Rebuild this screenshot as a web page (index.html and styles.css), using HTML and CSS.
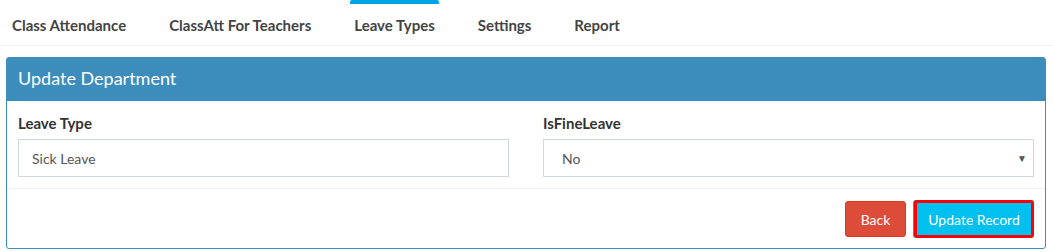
FILE: index.html
```html
<!DOCTYPE html>
<html lang="en">

<head>
    <meta charset="UTF-8">
    <meta name="viewport" content="width=device-width, initial-scale=1.0">
    <title>Update Department</title>
    <link rel="stylesheet" href="styles.css">
</head>

<body>
    <ul class="tabs">
        <li><a href="#">Class Attendance</a></li>
        <li><a href="#">ClassAtt For Teachers</a></li>
        <li class="active"><a href="#">Leave Types</a></li>
        <li><a href="#">Settings</a></li>
        <li><a href="#">Report</a></li>
    </ul>

    <div class="panel">
        <div class="panel-heading">Update Department</div>
        <form class="panel-body" action="post" method="post">
            <div class="field">
                <label for="leavetype">Leave Type</label>
                <input type="text" name="leavetype" id="leavetype" value="Sick Leave">
            </div>
            <div class="field">
                <label for="isfine">IsFineLeave</label>
                <div class="select-wrap">
                    <select name="isfine" id="isfine">
                        <option>No</option>
                        <option>Yes</option>
                    </select>
                </div>
            </div>
        </form>
        <div class="panel-footer">
            <button type="button" class="btn btn-back">Back</button>
            <button type="submit" class="btn btn-update">Update Record</button>
        </div>
    </div>
</body>

</html>
```

FILE: styles.css
```css
* {
    margin: 0;
    padding: 0;
    box-sizing: border-box;
}

body {
    font-family: Lato, "Open Sans", sans-serif;
    background-color: #fff;
    color: #333;
    padding: 0 6px;
}

.tabs {
    list-style: none;
    display: flex;
    height: 46px;
    margin: 0 -6px;
    padding-left: 8px;
    border-bottom: 1px solid #f2f2f2;
}

.tabs li {
    margin-right: 35px;
    border-top: 4px solid transparent;
    border-radius: 2px;
    padding: 11px 4px 0;
}

.tabs li.active {
    border-top-color: #00a3e4;
}

.tabs a {
    display: block;
    font-size: 15px;
    line-height: 20px;
    font-weight: bold;
    color: #444;
    text-decoration: none;
}

.panel {
    margin-top: 11px;
    border: 1px solid #3c8dbc;
    border-radius: 3px;
    width: 1040px;
}

.panel-heading {
    background-color: #3c8dbc;
    color: #fff;
    font-size: 18px;
    line-height: 24px;
    height: 43px;
    padding: 8px 11px;
}

.panel-body {
    display: grid;
    grid-template-columns: 1fr 1fr;
    gap: 34px;
    padding: 12px 11px 11px;
    border-bottom: 1px solid #f0f0f0;
}

label {
    display: block;
    font-size: 15px;
    line-height: 20px;
    font-weight: bold;
    color: #333;
    margin-bottom: 6px;
}

input[type="text"],
select {
    width: 100%;
    height: 38px;
    padding: 6px 13px;
    border: 1px solid #d2d6de;
    border-radius: 0;
    font-family: inherit;
    font-size: 14px;
    color: #555;
    background: #fff;
}

select {
    appearance: none;
    -webkit-appearance: none;
    padding-left: 18px;
}

.select-wrap {
    position: relative;
}

.select-wrap::after {
    content: "\25BC";
    position: absolute;
    right: 7px;
    top: 13px;
    font-size: 10px;
    color: #555;
    pointer-events: none;
}

.panel-footer {
    display: flex;
    justify-content: flex-end;
    gap: 8px;
    padding: 11px 11px 10px;
}

.btn {
    font-family: inherit;
    font-size: 14px;
    color: #fff;
    border-radius: 3px;
    cursor: pointer;
}

.btn-back {
    background-color: #dd4b39;
    border: 1px solid #d73925;
    height: 36px;
    width: 61px;
    margin-top: 1px;
}

.btn-update {
    background-color: #00c0ef;
    border: 3px solid #f00;
    height: 38px;
    width: 120px;
    box-shadow: -1px 0 0 #00acd6;
}
```
